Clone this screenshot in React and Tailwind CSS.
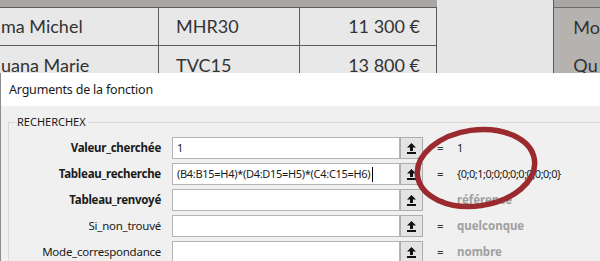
const args = [
  { label: "Valeur_cherchée", bold: true, value: "1", result: "1", dim: false },
  {
    label: "Tableau_recherche",
    bold: true,
    value: "(B4:B15=H4)*(D4:D15=H5)*(C4:C15=H6)",
    caret: true,
    result: "{0;0;1;0;0;0;0;0;0;0;0;0}",
    dim: false,
  },
  { label: "Tableau_renvoyé", bold: true, value: "", result: "référence", dim: true },
  { label: "Si_non_trouvé", bold: false, value: "", result: "quelconque", dim: true },
  { label: "Mode_correspondance", bold: false, value: "", result: "nombre", dim: true },
];

function RefIcon() {
  return (
    <svg width="9" height="11" viewBox="0 0 9 11" className="block">
      <path d="M4.5 0 L9 4.5 L6 4.5 L6 8 L3 8 L3 4.5 L0 4.5 Z" fill="#111" />
      <rect x="0" y="9" width="9" height="2" fill="#111" />
    </svg>
  );
}

function Sheet() {
  const cell = "flex items-center border-r border-[#5c5c5c]";
  return (
    <div className="flex h-[73px] shrink-0 overflow-hidden font-['Lato',sans-serif] text-[18px] leading-[27px] text-[#333]">
      <div className="flex w-[437px] flex-col">
        <div className="h-[8px] shrink-0 border-b border-[#5c5c5c] bg-[#aaa6a5]" />
        <div className="flex h-[38px] shrink-0 border-b border-[#5c5c5c] bg-[#e8e8e8]">
          <div className={`${cell} w-[159px] pl-px`}>ma Michel</div>
          <div className={`${cell} w-[141px] pl-[17px]`}>MHR30</div>
          <div className={`${cell} w-[137px] justify-end pr-[16px]`}>11 300 €</div>
        </div>
        <div className="flex h-[38px] shrink-0 bg-[#e8e8e8]">
          <div className={`${cell} w-[159px] pl-px`}>uana Marie</div>
          <div className={`${cell} w-[141px] pl-[17px]`}>TVC15</div>
          <div className={`${cell} w-[137px] justify-end pr-[16px]`}>13 800 €</div>
        </div>
      </div>
      <div className="w-[118px] border-r border-[#5c5c5c] bg-[#e6e6e6]" />
      <div className="flex flex-1 flex-col bg-[#b6b2b0]">
        <div className="h-[8px] shrink-0 border-b border-[#6a6a6a] bg-[#aaa6a5]" />
        <div className="flex h-[38px] shrink-0 items-center pl-[19px]">Mo</div>
        <div className="flex h-[38px] shrink-0 items-center pl-[19px]">Qu</div>
      </div>
    </div>
  );
}

export default function App() {
  return (
    <div className="relative flex h-[261px] w-[600px] flex-col overflow-hidden bg-white font-['Noto_Sans',sans-serif]">
      <Sheet />
      <div className="flex flex-1 flex-col border-l border-[#8c8c8c]">
        <div className="flex h-[33px] shrink-0 items-center bg-white pl-[8px] pt-px text-[12.5px] tracking-[-0.2px] text-[#1a1a1a]">
          Arguments de la fonction
        </div>
        <div className="flex-1 bg-[#f0f0f0] pl-[7px] pt-[9px]">
          <fieldset className="w-[640px] border border-[#d8d8d8] pt-[8px]">
            <legend className="ml-[6px] px-[2px] text-[11px] leading-[14px] text-[#1a1a1a]">RECHERCHEX</legend>
            <div className="flex flex-col gap-[4px]">
              {args.map((a) => (
                <div key={a.label} className="flex h-[22px] items-center text-[11.5px]">
                  <div
                    className={`w-[152px] whitespace-nowrap text-right tracking-[-0.25px] text-[#1a1a1a] ${a.bold ? "font-bold" : ""}`}
                  >
                    {a.label}
                  </div>
                  <div className="ml-[11px] flex h-[22px] w-[228px] items-center overflow-hidden whitespace-nowrap border border-[#b4b4b4] bg-white pl-[4px] text-[11px] tracking-[-0.3px] text-[#1a1a1a]">
                    {a.value}
                    {a.caret && <span className="ml-[2px] h-[15px] w-px shrink-0 bg-black" />}
                  </div>
                  <div className="flex h-[22px] w-[23px] items-center justify-center border border-[#adadad] bg-[#e4e4e4]">
                    <RefIcon />
                  </div>
                  <span className="ml-[14px] w-[6px] text-[#333]">=</span>
                  <span
                    className={`ml-[14px] whitespace-nowrap ${a.dim ? "font-bold text-[#a0a0a0]" : "text-[11px] tracking-[-0.5px] text-[#1a1a1a]"}`}
                  >
                    {a.result}
                  </span>
                </div>
              ))}
            </div>
          </fieldset>
        </div>
      </div>
      <svg className="pointer-events-none absolute left-0 top-0" width="600" height="261">
        <ellipse
          cx="476"
          cy="168"
          rx="59"
          ry="38"
          transform="rotate(-8 476 168)"
          fill="none"
          stroke="#9a2a2e"
          strokeWidth="5.5"
        />
      </svg>
    </div>
  );
}
